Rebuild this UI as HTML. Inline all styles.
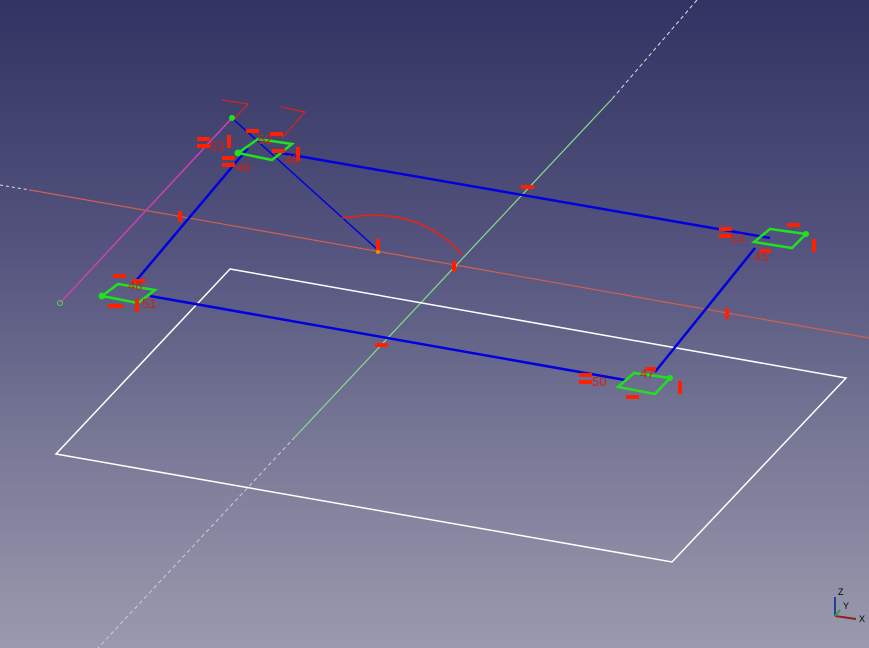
<!DOCTYPE html>
<html><head><style>
html,body{margin:0;padding:0;width:869px;height:648px;overflow:hidden}
body{background:linear-gradient(#333363 0%,#55557f 40%,#7a7a98 70%,#9a9aae 100%);font-family:"Liberation Sans",sans-serif}
svg{position:absolute;left:0;top:0}
</style></head><body>
<svg width="869" height="648" viewBox="0 0 869 648">
<line x1="697" y1="0" x2="612" y2="99" stroke="#ddd" stroke-width="1" stroke-dasharray="4,3"/>
<line x1="295" y1="437" x2="98" y2="648" stroke="#ccd" stroke-width="1" stroke-dasharray="4,3"/>
<line x1="612" y1="99" x2="295" y2="437" stroke="#8d8" stroke-width="1.2"/>
<line x1="0" y1="185" x2="30" y2="190" stroke="#ddd" stroke-width="1" stroke-dasharray="3,3"/>
<line x1="30" y1="190" x2="869" y2="338" stroke="#d06050" stroke-width="1.2"/>
<line x1="232" y1="118" x2="60" y2="303" stroke="#d040b0" stroke-width="1.5"/>
<circle cx="60" cy="303" r="2.5" fill="none" stroke="#4d4" />
<polygon points="230,269 846,378 672,562 56,454" fill="none" stroke="#fff" stroke-width="1.5"/>
<g stroke="#0000e0" stroke-width="2.5" fill="none">
<line x1="275" y1="152" x2="770" y2="238"/>
<line x1="755" y1="248" x2="655" y2="372"/>
<line x1="150" y1="296" x2="625" y2="380"/>
<line x1="135" y1="282" x2="248" y2="148"/>
<line x1="232" y1="118" x2="378" y2="250" stroke-width="1.5"/>
</g>
<path d="M342 218 Q420 205 462 255" stroke="#f02010" stroke-width="1.5" fill="none"/>
<circle cx="378" cy="252" r="2" fill="#f80"/>
<circle cx="455" cy="266" r="2" fill="#f80"/>
<g stroke="#20e020" stroke-width="2.5" fill="none">
<polygon points="238,153 258,139 292,144 272,160"/>
<polygon points="102,296 118,284 155,290 138,303"/>
<polygon points="754,242 770,229 806,234 792,248"/>
<polygon points="618,387 634,373 670,378 655,394"/>
</g>
<g fill="#20e020"><circle cx="238" cy="153" r="3.5"/><circle cx="102" cy="296" r="3.5"/><circle cx="806" cy="234" r="3"/><circle cx="670" cy="378" r="3"/><circle cx="232" cy="118" r="3"/></g>
<g fill="#ff2000">
<rect x="197" y="137" width="13" height="4"/><rect x="197" y="144" width="13" height="4"/><rect x="227" y="135" width="4" height="13"/>
<rect x="222" y="156" width="13" height="4"/><rect x="222" y="163" width="13" height="4"/>
<rect x="246" y="129" width="13" height="4"/><rect x="270" y="132" width="13" height="4"/><rect x="272" y="149" width="13" height="4"/><rect x="296" y="147" width="4" height="14"/>
<rect x="113" y="274" width="13" height="4"/><rect x="108" y="304" width="15" height="4"/><rect x="135" y="299" width="4" height="13"/><rect x="132" y="279" width="13" height="4"/>
<rect x="719" y="227" width="13" height="4"/><rect x="719" y="234" width="13" height="4"/><rect x="787" y="223" width="13" height="4"/><rect x="812" y="239" width="4" height="13"/><rect x="760" y="249" width="11" height="4"/>
<rect x="579" y="373" width="13" height="4"/><rect x="579" y="380" width="13" height="4"/><rect x="626" y="395" width="13" height="4"/><rect x="678" y="381" width="4" height="13"/><rect x="645" y="367" width="11" height="4"/>
<rect x="521" y="185" width="13" height="4"/><rect x="375" y="343" width="13" height="4"/><rect x="178" y="211" width="4" height="11"/><rect x="725" y="308" width="4" height="11"/><rect x="452" y="261" width="4" height="11"/>
<rect x="376" y="239" width="4" height="11"/>
</g>
<g stroke="#f02010" stroke-width="1" fill="none">
<path d="M222 100 L248 104 L235 118"/><path d="M281 107 L305 112 L282 138"/>
</g>
<g fill="#d02010" font-size="13">
<text x="210" y="151">53</text><text x="236" y="172">46</text><text x="285" y="164">49</text><text x="258" y="144">52</text>
<text x="128" y="290">48</text><text x="142" y="308">51</text>
<text x="730" y="243">54</text><text x="754" y="261">45</text>
<text x="592" y="386">50</text><text x="640" y="378">47</text>
</g>
<g font-size="9" fill="#000">
<line x1="835" y1="616" x2="835" y2="597" stroke="#2040a0" stroke-width="2"/>
<line x1="835" y1="616" x2="856" y2="619" stroke="#902020" stroke-width="2"/>
<line x1="835" y1="616" x2="840" y2="610" stroke="#30a030" stroke-width="2"/>
<text x="838" y="595">Z</text><text x="843" y="609">Y</text><text x="859" y="622">X</text>
</g>
</svg>
</body></html>
